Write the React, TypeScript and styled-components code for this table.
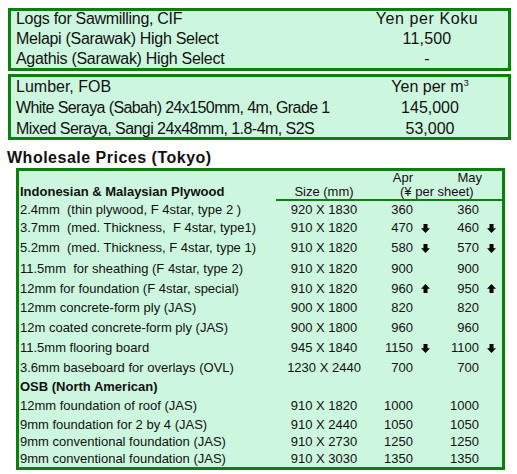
import React from 'react'
import styled, { createGlobalStyle } from 'styled-components'

const GlobalStyle = createGlobalStyle`
  body {
    margin: 0;
    background: #fff;
  }
  * {
    box-sizing: border-box;
  }
`

const Page = styled.div`
  width: 517px;
  height: 474px;
  padding: 8px 0 0 8px;
  font-family: 'Liberation Sans', Arial, sans-serif;
  color: #111;
  overflow: hidden;
`

const PriceBox = styled.div<{ $top?: number }>`
  width: 503px;
  margin-top: ${(p) => p.$top ?? 0}px;
  border: 3px solid #0c800c;
  background: #cdf6de;
  padding-left: 5px;
  font-size: 16px;
`

const BoxRow = styled.div<{ $h: number; $lh: number; $col: number }>`
  display: grid;
  grid-template-columns: 1fr ${(p) => p.$col}px;
  height: ${(p) => p.$h}px;
  line-height: ${(p) => p.$lh}px;
  white-space: nowrap;
`

const Label = styled.span<{ $track: number }>`
  letter-spacing: ${(p) => p.$track}px;
`

const Unit = styled.span<{ $track?: number }>`
  text-align: center;
  letter-spacing: ${(p) => p.$track ?? 0}px;
`

const Heading = styled.h2`
  margin: 9px 0 0 -1px;
  font-size: 16px;
  line-height: 18px;
  font-weight: bold;
  letter-spacing: 0.5px;
`

const TableBox = styled.div`
  width: 489px;
  margin: 1px 0 0 8px;
  border: 3px solid #0c800c;
  background: #cdf6de;
  padding-left: 1px;
  font-size: 13px;
`

const TableRow = styled.div<{ $h: number }>`
  display: grid;
  grid-template-columns: 256px 96px 68px 62px;
  height: ${(p) => p.$h}px;
  line-height: ${(p) => p.$h}px;
  white-space: pre;
`

const Desc = styled.span<{ $bold?: boolean }>`
  font-weight: ${(p) => (p.$bold ? 'bold' : 'normal')};
`

const Size = styled.span`
  text-align: center;
`

const PriceCell = styled.span`
  display: flex;
  align-items: center;
`

const Num = styled.span<{ $w: number }>`
  width: ${(p) => p.$w}px;
  text-align: right;
`

const SheetUnit = styled.span`
  grid-column: 3 / 5;
  padding-left: 28px;
`

const HeadRule = styled.div`
  height: 2px;
  margin-left: 256px;
  background: #0c800c;
`

const ArrowSvg = styled.svg`
  margin-left: 8px;
  flex: none;
`

const Arrow = ({ dir }: { dir: 'up' | 'down' }) => (
  <ArrowSvg viewBox="0 0 9 9" width={9} height={9}>
    <path
      d={dir === 'down' ? 'M2.5 0H6.5V4.3H9L4.5 9L0 4.3H2.5Z' : 'M4.5 0L9 4.7H6.5V9H2.5V4.7H0Z'}
      fill="#000"
    />
  </ArrowSvg>
)

type Row = {
  desc: string
  size?: string
  apr?: string
  aprDir?: 'up' | 'down'
  may?: string
  mayDir?: 'up' | 'down'
  h: number
  bold?: boolean
}

const rows: Row[] = [
  { desc: '2.4mm  (thin plywood, F 4star, type 2 )', size: '920 X 1830', apr: '360', may: '360', h: 17 },
  { desc: '3.7mm  (med. Thickness,  F 4star, type1)', size: '910 X 1820', apr: '470', aprDir: 'down', may: '460', mayDir: 'down', h: 20 },
  { desc: '5.2mm  (med. Thickness, F 4star, type 1)', size: '910 X 1820', apr: '580', aprDir: 'down', may: '570', mayDir: 'down', h: 20 },
  { desc: '11.5mm  for sheathing (F 4star, type 2)', size: '910 X 1820', apr: '900', may: '900', h: 21 },
  { desc: '12mm for foundation (F 4star, special)', size: '910 X 1820', apr: '960', aprDir: 'up', may: '950', mayDir: 'up', h: 19 },
  { desc: '12mm concrete-form ply (JAS)', size: '900 X 1800', apr: '820', may: '820', h: 20 },
  { desc: '12m coated concrete-form ply (JAS)', size: '900 X 1800', apr: '960', may: '960', h: 20 },
  { desc: '11.5mm flooring board', size: '945 X 1840', apr: '1150', aprDir: 'down', may: '1100', mayDir: 'down', h: 20 },
  { desc: '3.6mm baseboard for overlays (OVL)', size: '1230 X 2440', apr: '700', may: '700', h: 19 },
  { desc: 'OSB (North American)', bold: true, h: 19 },
  { desc: '12mm foundation of roof (JAS)', size: '910 X 1820', apr: '1000', may: '1000', h: 20 },
  { desc: '9mm foundation for 2 by 4 (JAS)', size: '910 X 2440', apr: '1050', may: '1050', h: 17 },
  { desc: '9mm conventional foundation (JAS)', size: '910 X 2730', apr: '1250', may: '1250', h: 17 },
  { desc: '9mm conventional foundation (JAS)', size: '910 X 3030', apr: '1350', may: '1350', h: 17 },
]

const App: React.FC = () => {
  return (
    <Page>
      <GlobalStyle />
      <PriceBox>
        <BoxRow $h={20} $lh={16} $col={162}>
          <Label $track={-0.3}>Logs for Sawmilling, CIF</Label>
          <Unit $track={0.6}>Yen per Koku</Unit>
        </BoxRow>
        <BoxRow $h={20} $lh={16} $col={162}>
          <Label $track={-0.3}>Melapi (Sarawak) High Select</Label>
          <Unit $track={0.2}>11,500</Unit>
        </BoxRow>
        <BoxRow $h={17} $lh={16} $col={162}>
          <Label $track={-0.3}>Agathis (Sarawak) High Select</Label>
          <Unit>-</Unit>
        </BoxRow>
      </PriceBox>

      <PriceBox $top={3}>
        <BoxRow $h={21} $lh={20} $col={156}>
          <Label $track={0}>Lumber, FOB</Label>
          <Unit>
            Yen per m<sup style={{ fontSize: 9, lineHeight: 0 }}>3</sup>
          </Unit>
        </BoxRow>
        <BoxRow $h={21} $lh={20} $col={156}>
          <Label $track={-0.6}>White Seraya (Sabah) 24x150mm, 4m, Grade 1</Label>
          <Unit>145,000</Unit>
        </BoxRow>
        <BoxRow $h={18} $lh={20} $col={156}>
          <Label $track={-0.55}>Mixed Seraya, Sangi 24x48mm, 1.8-4m, S2S</Label>
          <Unit>53,000</Unit>
        </BoxRow>
      </PriceBox>

      <Heading>Wholesale Prices (Tokyo)</Heading>

      <TableBox>
        <TableRow $h={14}>
          <span />
          <span />
          <PriceCell>
            <Num $w={41}>Apr</Num>
          </PriceCell>
          <PriceCell>
            <Num $w={42}>May</Num>
          </PriceCell>
        </TableRow>
        <TableRow $h={14}>
          <Desc $bold>Indonesian &amp; Malaysian Plywood</Desc>
          <Size>Size (mm)</Size>
          <SheetUnit>(¥ per sheet)</SheetUnit>
        </TableRow>
        <HeadRule />
        {rows.map((r, i) => (
          <TableRow key={i} $h={r.h}>
            <Desc $bold={r.bold}>{r.desc}</Desc>
            <Size>{r.size}</Size>
            <PriceCell>
              <Num $w={41}>{r.apr}</Num>
              {r.aprDir && <Arrow dir={r.aprDir} />}
            </PriceCell>
            <PriceCell>
              <Num $w={39}>{r.may}</Num>
              {r.mayDir && <Arrow dir={r.mayDir} />}
            </PriceCell>
          </TableRow>
        ))}
      </TableBox>
    </Page>
  )
}

export default App
